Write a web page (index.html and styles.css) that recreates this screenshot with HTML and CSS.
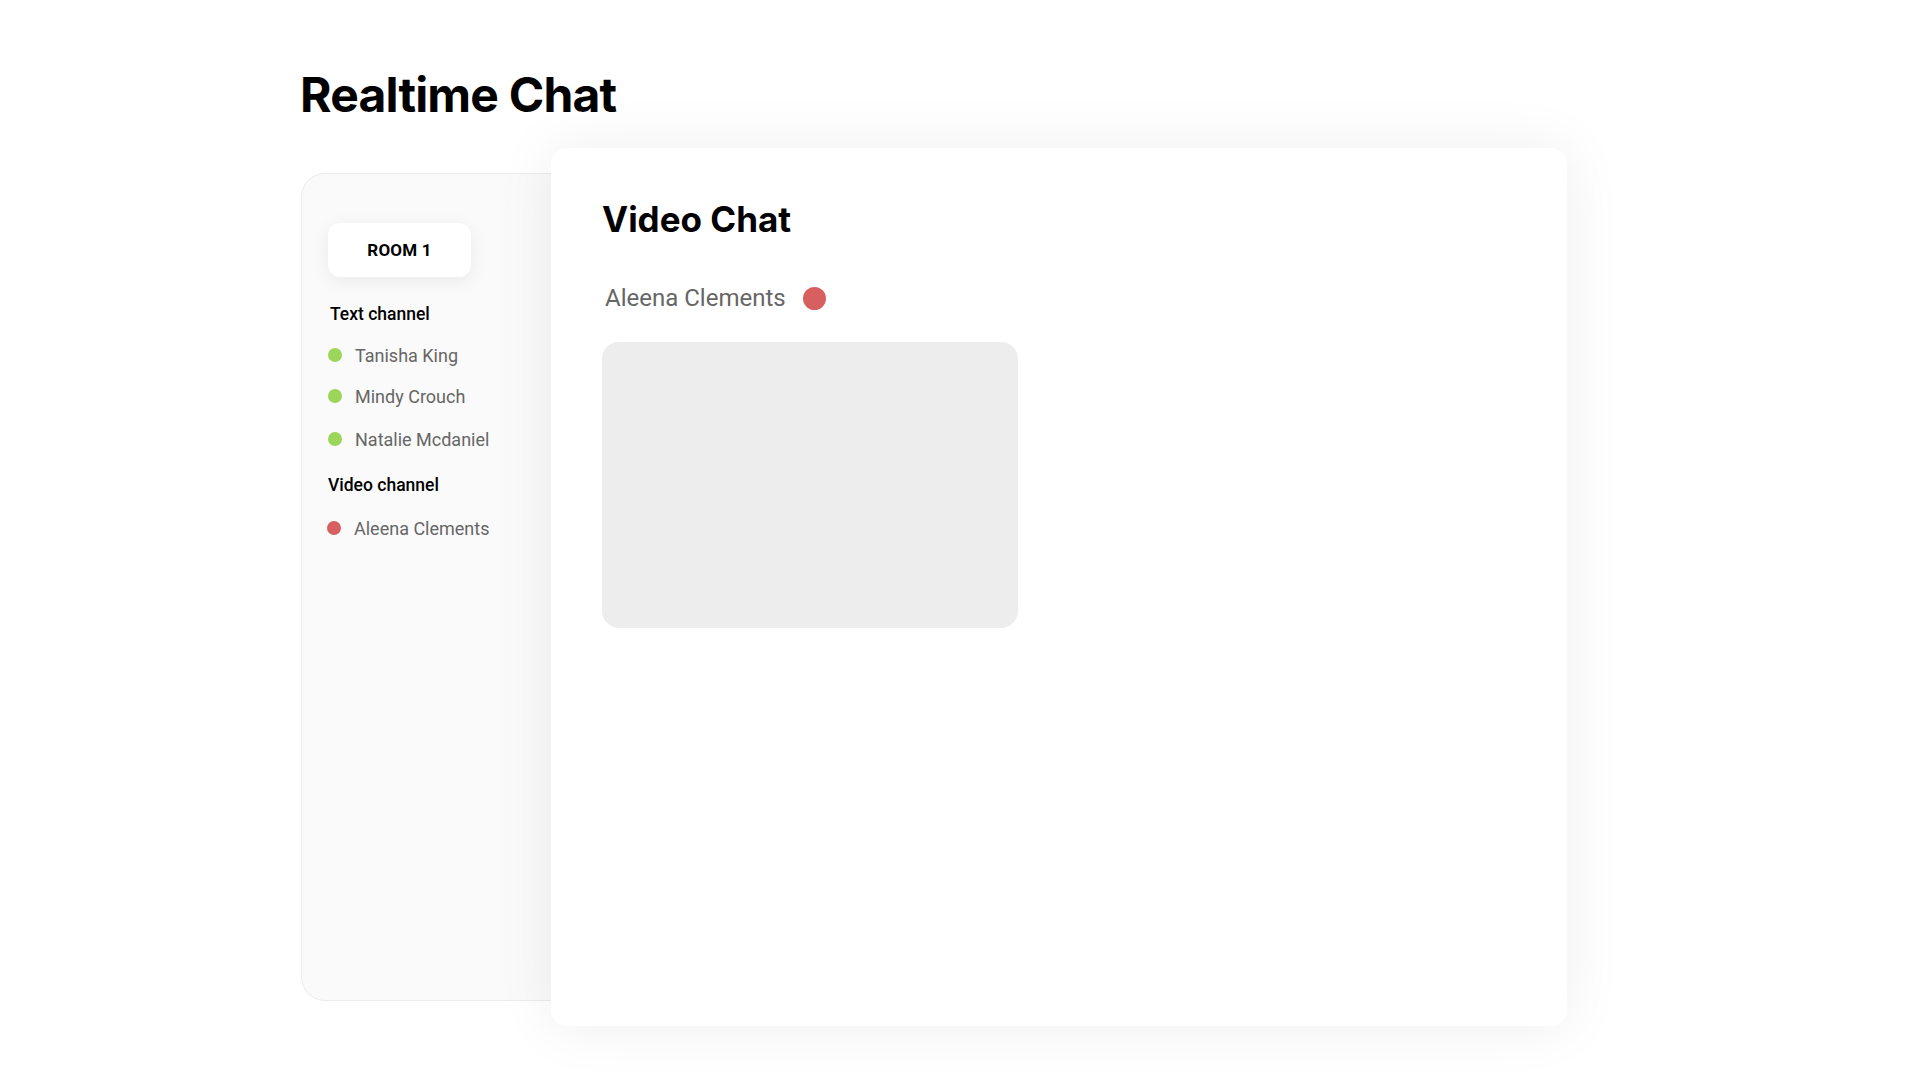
FILE: index.html
```html
<!DOCTYPE html>
<html lang="en">
<head>
<meta charset="utf-8">
<title>Realtime Chat</title>
<link rel="stylesheet" href="styles.css">
</head>
<body>
<div class="page">
  <h1 class="page-title">Realtime Chat</h1>
  <div class="layout">
    <aside class="sidebar">
      <button class="room-btn">ROOM 1</button>
      <div class="channel-title">Text channel</div>
      <ul class="users">
        <li class="user"><span class="dot dot-green"></span>Tanisha King</li>
        <li class="user"><span class="dot dot-green"></span>Mindy Crouch</li>
        <li class="user"><span class="dot dot-green"></span>Natalie Mcdaniel</li>
      </ul>
      <div class="channel-title channel-video">Video channel</div>
      <ul class="users users-video">
        <li class="user user-red"><span class="dot dot-red"></span>Aleena Clements</li>
      </ul>
    </aside>
    <main class="main-card">
      <h2 class="card-title">Video Chat</h2>
      <div class="participant">
        <span class="participant-name">Aleena Clements</span>
        <span class="big-dot"></span>
      </div>
      <div class="video-box"></div>
    </main>
  </div>
</div>
</body>
</html>
```
FILE: styles.css
```css
* { box-sizing: border-box; }
html, body { margin: 0; padding: 0; background: #ffffff; }
body { font-family: Roboto, "Liberation Sans", sans-serif; color: #000; }
.page { padding: 66px 0 60px 301px; }
.page-title {
  font-family: Inter, "Liberation Sans", sans-serif;
  font-weight: 700;
  font-size: 48px;
  line-height: 58px;
  letter-spacing: -0.8px;
  margin: 0 0 24px -1px;
}
.layout { display: flex; align-items: center; width: 1270px; }
.sidebar {
  width: 283px;
  height: 828px;
  flex: 0 0 283px;
  background: #fafafa;
  border: 1px solid #ececec;
  border-radius: 24px;
  padding: 49px 0 0 26px;
}
.room-btn {
  width: 143px; height: 54px;
  border: none; border-radius: 12px;
  background: #fff;
  box-shadow: 0 4px 18px rgba(0,0,0,0.07);
  font-family: Roboto, sans-serif;
  font-weight: 700; font-size: 17px; color: #000;
  letter-spacing: 0.2px;
  display: block;
}
.channel-title {
  font-weight: 500; font-size: 17.5px; color: #000;
  margin: 26px 0 0 2px;
  line-height: 22px;
}
.channel-video { margin-top: 24px; margin-left: 0; }
.users { list-style: none; margin: 19px 0 0; padding: 0; }
.users-video { margin-top: 21px; }
.user {
  display: flex; align-items: center;
  font-size: 18px; color: #666;
  height: 22px;
  margin-bottom: 19px;
}
.user:nth-child(2) { margin-bottom: 21px; }
.user-red { margin-left: -1px; }
.dot { width: 14px; height: 14px; border-radius: 50%; margin-right: 13px; flex: none; }
.dot-green { background: #9bd65a; }
.dot-red { background: #d85f5f; }
.main-card {
  flex: 0 0 1016px;
  height: 878px;
  margin-left: -33px;
  position: relative;
  z-index: 1;
  background: #fff;
  border-radius: 16px;
  box-shadow: 0 0 60px rgba(0,0,0,0.07);
  padding: 50px 0 0 51px;
}
.card-title {
  font-family: Inter, "Liberation Sans", sans-serif;
  font-weight: 700; font-size: 35px; line-height: 42px;
  letter-spacing: 0;
  margin: 0;
}
.participant { display: flex; align-items: center; margin: 43px 0 0 3px; height: 30px; }
.participant-name { font-size: 24px; color: #666; }
.big-dot { width: 23px; height: 23px; border-radius: 50%; background: #d85f5f; margin-left: 17px; }
.video-box {
  width: 416px; height: 286px;
  background: #ededed;
  border-radius: 17px;
  margin-top: 29px;
}
```
